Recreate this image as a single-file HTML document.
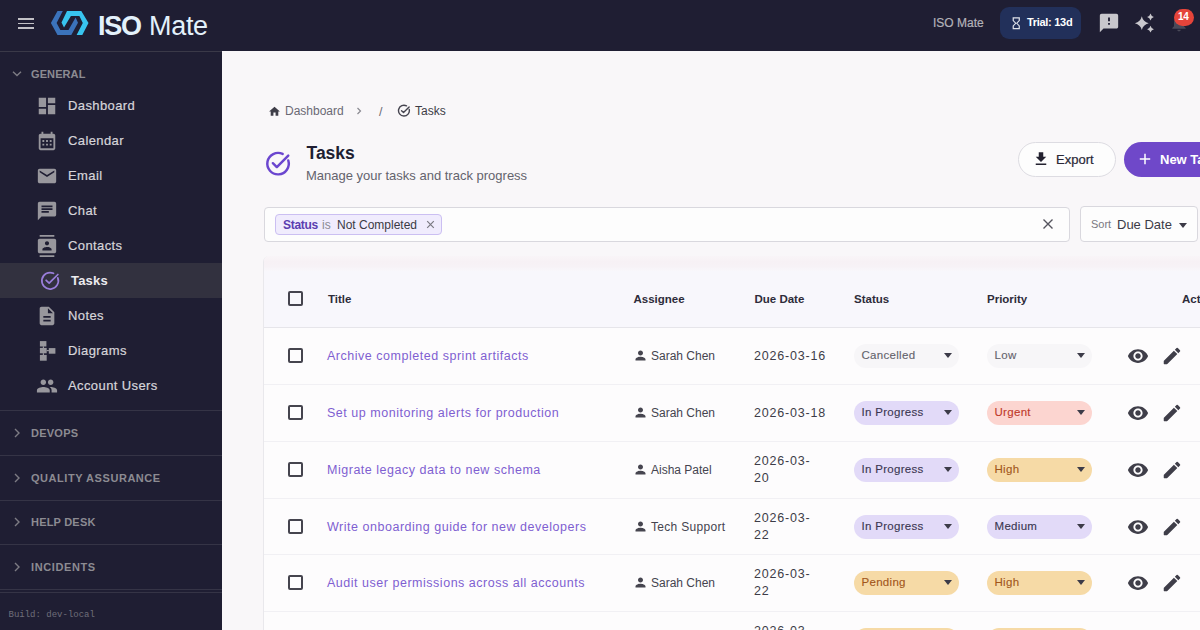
<!DOCTYPE html>
<html><head><meta charset="utf-8">
<style>
*{box-sizing:border-box;margin:0;padding:0}
html,body{width:1200px;height:630px;overflow:hidden;background:#f9f7f9;font-family:"Liberation Sans",sans-serif;-webkit-font-smoothing:antialiased}
.abs{position:absolute}
#hdr{position:absolute;left:0;top:0;width:1200px;height:51px;background:#1f1e33}
#side{position:absolute;left:0;top:51px;width:222px;height:579px;background:#1f1e33;border-top:1px solid #3a3948}
.t{position:absolute;white-space:nowrap;line-height:1}
svg{position:absolute;display:block}
.nav{color:#d6d5da;font-size:13px;letter-spacing:0.4px;-webkit-text-stroke:0.2px #d6d5da}
.sec{color:#8c8b92;font-size:11px;font-weight:bold;letter-spacing:1px}
.sep{position:absolute;left:0;width:222px;height:1px;background:#353446}
.cb{position:absolute;width:15px;height:15px;border:2px solid #45444e;border-radius:2px}
.rowsep{position:absolute;left:264px;width:936px;height:1px;background:#f1f0f4}
.ttl{color:#7f5fd1;font-size:12.5px;letter-spacing:0.52px}
.asg{color:#45444f;font-size:12px}
.dt{color:#3d3c48;font-size:12.5px;line-height:17.5px;letter-spacing:0.8px}
.pill{position:absolute;height:24px;border-radius:12px}
.pt{position:absolute;font-size:11.5px;letter-spacing:.3px;-webkit-text-stroke:0.12px currentColor;white-space:nowrap;line-height:1}
.tri{position:absolute;width:0;height:0;border-left:4px solid transparent;border-right:4px solid transparent;border-top:5px solid #3c3b48}
.th{color:#2e2c3a;font-size:11.5px;font-weight:bold}
</style></head><body>
<div id="hdr"></div>
<div id="side"></div>

<!-- hamburger -->
<div class="abs" style="left:18px;top:18px;width:16px;height:1.5px;background:#c2c1c6"></div>
<div class="abs" style="left:18px;top:22.5px;width:16px;height:1.5px;background:#c2c1c6"></div>
<div class="abs" style="left:18px;top:27px;width:16px;height:1.5px;background:#c2c1c6"></div>
<!-- logo -->
<svg style="left:0;top:0" width="100" height="51" viewBox="0 0 100 51">
<polygon fill="#3b73bb" points="57.5,11.1 62.8,11.1 56.6,23 60.4,29.9 68.5,29.9 75.6,17.5 78,22.8 71.3,34.9 57.5,34.9 50.9,23"/>
<polygon fill="#38c4ef" points="67,11.1 81.3,11.1 88.5,23 82.3,34.9 76.6,34.9 82.8,23 79.4,16.1 70.9,16.1 64,27.5 61.5,22.5"/>
</svg>
<div class="t" style="left:98px;top:12.5px;font-size:27px;font-weight:bold;color:#e3f1fb;letter-spacing:-1.3px">ISO</div>
<div class="t" style="left:149px;top:12.5px;font-size:27px;color:#e3f1fb;letter-spacing:-0.3px">Mate</div>

<!-- sidebar -->
<svg style="left:12px;top:70px" width="10" height="8" viewBox="0 0 10 8"><path d="M1 1.8l4 3.8 4-3.8" fill="none" stroke="#7d7c84" stroke-width="1.4"/></svg>
<div class="t sec" style="left:31px;top:69px;letter-spacing:0.1px">GENERAL</div>
<svg style="left:36px;top:94.5px" width="22" height="22" viewBox="0 0 24 24"><path fill="#98979d" d="M3 13h8V3H3v10zm0 8h8v-6H3v6zm10 0h8V11h-8v10zm0-18v6h8V3h-8z"/></svg>
<div class="t nav" style="left:68px;top:99px">Dashboard</div>
<svg style="left:36px;top:129.5px" width="22" height="22" viewBox="0 0 24 24"><path fill="#98979d" d="M19 4h-1V2h-2v2H8V2H6v2H5c-1.11 0-1.99.9-1.99 2L3 20c0 1.1.89 2 2 2h14c1.1 0 2-.9 2-2V6c0-1.1-.9-2-2-2zm0 16H5V9h14v11zM7 11h2v2H7zm4 0h2v2h-2zm4 0h2v2h-2zM7 15h2v2H7zm4 0h2v2h-2zm4 0h2v2h-2z"/></svg>
<div class="t nav" style="left:68px;top:134px">Calendar</div>
<svg style="left:36px;top:164.5px" width="22" height="22" viewBox="0 0 24 24"><path fill="#98979d" d="M20 4H4c-1.1 0-1.99.9-1.99 2L2 18c0 1.1.9 2 2 2h16c1.1 0 2-.9 2-2V6c0-1.1-.9-2-2-2zm0 4l-8 5-8-5V6l8 5 8-5v2z"/></svg>
<div class="t nav" style="left:68px;top:169px">Email</div>
<svg style="left:36px;top:199.5px" width="22" height="22" viewBox="0 0 24 24"><path fill="#98979d" d="M20 2H4c-1.1 0-1.99.9-1.99 2L2 22l4-4h14c1.1 0 2-.9 2-2V4c0-1.1-.9-2-2-2zM6 9h12v2H6V9zm8 5H6v-2h8v2zm4-6H6V6h12v2z"/></svg>
<div class="t nav" style="left:68px;top:204px">Chat</div>
<svg style="left:36px;top:234.5px" width="22" height="22" viewBox="0 0 24 24"><path fill="#98979d" d="M20 0H4v2h16V0zM4 24h16v-2H4v2zM20 4H4c-1.1 0-2 .9-2 2v12c0 1.1.9 2 2 2h16c1.1 0 2-.9 2-2V6c0-1.1-.9-2-2-2zm-8 2.75c1.24 0 2.25 1.01 2.25 2.25s-1.01 2.25-2.25 2.25S9.75 10.24 9.75 9 10.76 6.75 12 6.75zM17 17H7v-1.5c0-1.67 3.33-2.5 5-2.5s5 .83 5 2.5V17z"/></svg>
<div class="t nav" style="left:68px;top:239px">Contacts</div>
<div class="abs" style="left:0;top:263px;width:222px;height:35px;background:#32313f"></div>
<svg style="left:39px;top:270px" width="22" height="22" viewBox="0 0 24 24"><path d="M20.5 8.6A9 9 0 1 1 15.8 3.6" fill="none" stroke="#9a7edb" stroke-width="1.9" stroke-linecap="round"/><path d="M7.8 11.2l3.3 3.2L20.6 4.9" fill="none" stroke="#9a7edb" stroke-width="1.9" stroke-linecap="round" stroke-linejoin="round"/></svg>
<div class="t nav" style="left:71px;top:274px;font-weight:bold;color:#ecebef;-webkit-text-stroke:0;letter-spacing:0.2px">Tasks</div>
<svg style="left:36px;top:304.5px" width="22" height="22" viewBox="0 0 24 24"><path fill="#98979d" d="M14 2H6c-1.1 0-1.99.9-1.99 2L4 20c0 1.1.89 2 1.99 2H18c1.1 0 2-.9 2-2V8l-6-6zm2 16H8v-2h8v2zm0-4H8v-2h8v2zm-3-5V3.5L18.5 9H13z"/></svg>
<div class="t nav" style="left:68px;top:309px">Notes</div>
<svg style="left:36px;top:338px" width="24" height="26" viewBox="0 0 24 26"><g fill="#98979d"><rect x="3.9" y="3.1" width="6.5" height="5.4"/><rect x="3.9" y="9.9" width="6.8" height="5.4"/><rect x="3.9" y="16.9" width="6.8" height="5.8"/><rect x="12.8" y="10.1" width="6.6" height="5.6"/><rect x="6.8" y="8.3" width="1.2" height="1.8"/><rect x="6.8" y="15.2" width="1.2" height="1.8"/><rect x="10.6" y="12" width="2.3" height="1.2"/></g></svg>
<div class="t nav" style="left:68px;top:344px">Diagrams</div>
<svg style="left:36px;top:374.5px" width="22" height="22" viewBox="0 0 24 24"><path fill="#98979d" d="M16 11c1.66 0 2.99-1.34 2.99-3S17.66 5 16 5c-1.66 0-3 1.34-3 3s1.34 3 3 3zm-8 0c1.66 0 2.99-1.34 2.99-3S9.66 5 8 5C6.34 5 5 6.34 5 8s1.34 3 3 3zm0 2c-2.33 0-7 1.17-7 3.5V19h14v-2.5c0-2.33-4.67-3.5-7-3.5zm8 0c-.29 0-.62.02-.97.05 1.16.84 1.97 1.97 1.97 3.45V19h6v-2.5c0-2.33-4.67-3.5-7-3.5z"/></svg>
<div class="t nav" style="left:68px;top:379px">Account Users</div>
<div class="sep" style="top:410px"></div>
<svg style="left:12px;top:428px" width="10" height="10" viewBox="0 0 10 10"><path d="M3 1l4 4-4 4" fill="none" stroke="#7d7c84" stroke-width="1.4"/></svg>
<div class="t sec" style="left:31px;top:428px;letter-spacing:0.25px">DEVOPS</div>
<div class="sep" style="top:455px"></div>
<svg style="left:12px;top:473px" width="10" height="10" viewBox="0 0 10 10"><path d="M3 1l4 4-4 4" fill="none" stroke="#7d7c84" stroke-width="1.4"/></svg>
<div class="t sec" style="left:31px;top:473px;letter-spacing:0.55px">QUALITY ASSURANCE</div>
<div class="sep" style="top:500px"></div>
<svg style="left:12px;top:517px" width="10" height="10" viewBox="0 0 10 10"><path d="M3 1l4 4-4 4" fill="none" stroke="#7d7c84" stroke-width="1.4"/></svg>
<div class="t sec" style="left:31px;top:517px;letter-spacing:0.2px">HELP DESK</div>
<div class="sep" style="top:544px"></div>
<svg style="left:12px;top:562px" width="10" height="10" viewBox="0 0 10 10"><path d="M3 1l4 4-4 4" fill="none" stroke="#7d7c84" stroke-width="1.4"/></svg>
<div class="t sec" style="left:31px;top:562px;letter-spacing:0.6px">INCIDENTS</div>
<div class="sep" style="top:589px"></div>
<div class="sep" style="top:592px"></div>
<div class="t" style="left:8.5px;top:611px;font-family:'Liberation Mono',monospace;font-size:9px;color:#6f6e7a">Build: dev-local</div>


<!-- table -->
<div class="abs" style="left:263px;top:256px;width:940px;height:380px;background:#fdfcfd;border-left:1px solid #e9e8ec;border-top-left-radius:6px;overflow:hidden"></div>
<div class="abs" style="left:264px;top:256px;width:940px;height:15px;border-top-left-radius:5px;background:linear-gradient(#f9f5f8,#f7f1f5 40%,#f7f2f6 70%,#f9f7fb)"></div>
<div class="abs" style="left:264px;top:271px;width:940px;height:57px;background:#f8f7fc;border-bottom:1px solid #e6e5ea"></div>
<div class="cb" style="left:288px;top:291px"></div>
<div class="t th" style="left:328px;top:293.5px">Title</div>
<div class="t th" style="left:633.5px;top:293.5px">Assignee</div>
<div class="t th" style="left:754.5px;top:293.5px">Due Date</div>
<div class="t th" style="left:854px;top:293.5px">Status</div>
<div class="t th" style="left:987px;top:293.5px">Priority</div>
<div class="t th" style="left:1182px;top:293.5px">Actions</div>
<div class="cb" style="left:288px;top:348px"></div>
<div class="t ttl" style="left:327px;top:349.75px">Archive completed sprint artifacts</div>
<svg style="left:633px;top:347.5px" width="15" height="15" viewBox="0 0 24 24"><path fill="#46454f" d="M12 12c2.21 0 4-1.79 4-4s-1.79-4-4-4-4 1.79-4 4 1.79 4 4 4zm0 2c-2.67 0-8 1.34-8 4v2h16v-2c0-2.66-5.33-4-8-4z"/></svg>
<div class="t asg" style="left:651px;top:349.75px">Sarah Chen</div>
<div class="t dt" style="left:754px;top:349.75px;line-height:1">2026-03-16</div>
<div class="pill" style="left:854px;top:343.5px;width:105px;background:#f7f6f8"></div>
<div class="pt" style="left:861.5px;top:349.5px;color:#64636c">Cancelled</div>
<div class="tri" style="left:943.5px;top:353px"></div>
<div class="pill" style="left:987px;top:343.5px;width:105px;background:#f7f6f8"></div>
<div class="pt" style="left:994.5px;top:349.5px;color:#64636c">Low</div>
<div class="tri" style="left:1076.5px;top:353px"></div>
<svg style="left:1126.5px;top:344.5px" width="22" height="22" viewBox="0 0 24 24"><path fill="#3f3e49" d="M12 4.5C7 4.5 2.73 7.61 1 12c1.73 4.39 6 7.5 11 7.5s9.27-3.11 11-7.5c-1.73-4.39-6-7.5-11-7.5zM12 17c-2.76 0-5-2.24-5-5s2.24-5 5-5 5 2.24 5 5-2.24 5-5 5zm0-8c-1.66 0-3 1.34-3 3s1.34 3 3 3 3-1.34 3-3-1.34-3-3-3z"/></svg>
<svg style="left:1161.3px;top:344.5px" width="22" height="22" viewBox="0 0 24 24"><path fill="#3f3e49" d="M3 17.46v3.04c0 .28.22.5.5.5h3.04c.13 0 .26-.05.35-.15L17.81 9.94l-3.75-3.75L3.15 17.1c-.1.1-.15.22-.15.36zM20.71 7.04a.996.996 0 0 0 0-1.41l-2.34-2.34a.996.996 0 0 0-1.41 0l-1.83 1.83 3.75 3.75 1.83-1.83z"/></svg>
<div class="rowsep" style="top:384px"></div>
<div class="cb" style="left:288px;top:405px"></div>
<div class="t ttl" style="left:327px;top:406.75px">Set up monitoring alerts for production</div>
<svg style="left:633px;top:404.5px" width="15" height="15" viewBox="0 0 24 24"><path fill="#46454f" d="M12 12c2.21 0 4-1.79 4-4s-1.79-4-4-4-4 1.79-4 4 1.79 4 4 4zm0 2c-2.67 0-8 1.34-8 4v2h16v-2c0-2.66-5.33-4-8-4z"/></svg>
<div class="t asg" style="left:651px;top:406.75px">Sarah Chen</div>
<div class="t dt" style="left:754px;top:406.75px;line-height:1">2026-03-18</div>
<div class="pill" style="left:854px;top:400.5px;width:105px;background:#e2daf8"></div>
<div class="pt" style="left:861.5px;top:406.5px;color:#3a3652">In Progress</div>
<div class="tri" style="left:943.5px;top:410px"></div>
<div class="pill" style="left:987px;top:400.5px;width:105px;background:#fcd5d0"></div>
<div class="pt" style="left:994.5px;top:406.5px;color:#c0392b">Urgent</div>
<div class="tri" style="left:1076.5px;top:410px"></div>
<svg style="left:1126.5px;top:401.5px" width="22" height="22" viewBox="0 0 24 24"><path fill="#3f3e49" d="M12 4.5C7 4.5 2.73 7.61 1 12c1.73 4.39 6 7.5 11 7.5s9.27-3.11 11-7.5c-1.73-4.39-6-7.5-11-7.5zM12 17c-2.76 0-5-2.24-5-5s2.24-5 5-5 5 2.24 5 5-2.24 5-5 5zm0-8c-1.66 0-3 1.34-3 3s1.34 3 3 3 3-1.34 3-3-1.34-3-3-3z"/></svg>
<svg style="left:1161.3px;top:401.5px" width="22" height="22" viewBox="0 0 24 24"><path fill="#3f3e49" d="M3 17.46v3.04c0 .28.22.5.5.5h3.04c.13 0 .26-.05.35-.15L17.81 9.94l-3.75-3.75L3.15 17.1c-.1.1-.15.22-.15.36zM20.71 7.04a.996.996 0 0 0 0-1.41l-2.34-2.34a.996.996 0 0 0-1.41 0l-1.83 1.83 3.75 3.75 1.83-1.83z"/></svg>
<div class="rowsep" style="top:441px"></div>
<div class="cb" style="left:288px;top:462px"></div>
<div class="t ttl" style="left:327px;top:463.75px">Migrate legacy data to new schema</div>
<svg style="left:633px;top:461.5px" width="15" height="15" viewBox="0 0 24 24"><path fill="#46454f" d="M12 12c2.21 0 4-1.79 4-4s-1.79-4-4-4-4 1.79-4 4 1.79 4 4 4zm0 2c-2.67 0-8 1.34-8 4v2h16v-2c0-2.66-5.33-4-8-4z"/></svg>
<div class="t asg" style="left:651px;top:463.75px">Aisha Patel</div>
<div class="t dt" style="left:754px;top:452.5px">2026-03-<br>20</div>
<div class="pill" style="left:854px;top:457.5px;width:105px;background:#e2daf8"></div>
<div class="pt" style="left:861.5px;top:463.5px;color:#3a3652">In Progress</div>
<div class="tri" style="left:943.5px;top:467px"></div>
<div class="pill" style="left:987px;top:457.5px;width:105px;background:#f6daa6"></div>
<div class="pt" style="left:994.5px;top:463.5px;color:#a2561b">High</div>
<div class="tri" style="left:1076.5px;top:467px"></div>
<svg style="left:1126.5px;top:458.5px" width="22" height="22" viewBox="0 0 24 24"><path fill="#3f3e49" d="M12 4.5C7 4.5 2.73 7.61 1 12c1.73 4.39 6 7.5 11 7.5s9.27-3.11 11-7.5c-1.73-4.39-6-7.5-11-7.5zM12 17c-2.76 0-5-2.24-5-5s2.24-5 5-5 5 2.24 5 5-2.24 5-5 5zm0-8c-1.66 0-3 1.34-3 3s1.34 3 3 3 3-1.34 3-3-1.34-3-3-3z"/></svg>
<svg style="left:1161.3px;top:458.5px" width="22" height="22" viewBox="0 0 24 24"><path fill="#3f3e49" d="M3 17.46v3.04c0 .28.22.5.5.5h3.04c.13 0 .26-.05.35-.15L17.81 9.94l-3.75-3.75L3.15 17.1c-.1.1-.15.22-.15.36zM20.71 7.04a.996.996 0 0 0 0-1.41l-2.34-2.34a.996.996 0 0 0-1.41 0l-1.83 1.83 3.75 3.75 1.83-1.83z"/></svg>
<div class="rowsep" style="top:498px"></div>
<div class="cb" style="left:288px;top:519px"></div>
<div class="t ttl" style="left:327px;top:520.75px">Write onboarding guide for new developers</div>
<svg style="left:633px;top:518.5px" width="15" height="15" viewBox="0 0 24 24"><path fill="#46454f" d="M12 12c2.21 0 4-1.79 4-4s-1.79-4-4-4-4 1.79-4 4 1.79 4 4 4zm0 2c-2.67 0-8 1.34-8 4v2h16v-2c0-2.66-5.33-4-8-4z"/></svg>
<div class="t asg" style="left:651px;top:520.75px;letter-spacing:0.3px">Tech Support</div>
<div class="t dt" style="left:754px;top:509.5px">2026-03-<br>22</div>
<div class="pill" style="left:854px;top:514.5px;width:105px;background:#e2daf8"></div>
<div class="pt" style="left:861.5px;top:520.5px;color:#3a3652">In Progress</div>
<div class="tri" style="left:943.5px;top:524px"></div>
<div class="pill" style="left:987px;top:514.5px;width:105px;background:#e2daf8"></div>
<div class="pt" style="left:994.5px;top:520.5px;color:#3a3652">Medium</div>
<div class="tri" style="left:1076.5px;top:524px"></div>
<svg style="left:1126.5px;top:515.5px" width="22" height="22" viewBox="0 0 24 24"><path fill="#3f3e49" d="M12 4.5C7 4.5 2.73 7.61 1 12c1.73 4.39 6 7.5 11 7.5s9.27-3.11 11-7.5c-1.73-4.39-6-7.5-11-7.5zM12 17c-2.76 0-5-2.24-5-5s2.24-5 5-5 5 2.24 5 5-2.24 5-5 5zm0-8c-1.66 0-3 1.34-3 3s1.34 3 3 3 3-1.34 3-3-1.34-3-3-3z"/></svg>
<svg style="left:1161.3px;top:515.5px" width="22" height="22" viewBox="0 0 24 24"><path fill="#3f3e49" d="M3 17.46v3.04c0 .28.22.5.5.5h3.04c.13 0 .26-.05.35-.15L17.81 9.94l-3.75-3.75L3.15 17.1c-.1.1-.15.22-.15.36zM20.71 7.04a.996.996 0 0 0 0-1.41l-2.34-2.34a.996.996 0 0 0-1.41 0l-1.83 1.83 3.75 3.75 1.83-1.83z"/></svg>
<div class="rowsep" style="top:554px"></div>
<div class="cb" style="left:288px;top:575px"></div>
<div class="t ttl" style="left:327px;top:576.75px">Audit user permissions across all accounts</div>
<svg style="left:633px;top:574.5px" width="15" height="15" viewBox="0 0 24 24"><path fill="#46454f" d="M12 12c2.21 0 4-1.79 4-4s-1.79-4-4-4-4 1.79-4 4 1.79 4 4 4zm0 2c-2.67 0-8 1.34-8 4v2h16v-2c0-2.66-5.33-4-8-4z"/></svg>
<div class="t asg" style="left:651px;top:576.75px">Sarah Chen</div>
<div class="t dt" style="left:754px;top:565.5px">2026-03-<br>22</div>
<div class="pill" style="left:854px;top:570.5px;width:105px;background:#f6daa6"></div>
<div class="pt" style="left:861.5px;top:576.5px;color:#a2561b">Pending</div>
<div class="tri" style="left:943.5px;top:580px"></div>
<div class="pill" style="left:987px;top:570.5px;width:105px;background:#f6daa6"></div>
<div class="pt" style="left:994.5px;top:576.5px;color:#a2561b">High</div>
<div class="tri" style="left:1076.5px;top:580px"></div>
<svg style="left:1126.5px;top:571.5px" width="22" height="22" viewBox="0 0 24 24"><path fill="#3f3e49" d="M12 4.5C7 4.5 2.73 7.61 1 12c1.73 4.39 6 7.5 11 7.5s9.27-3.11 11-7.5c-1.73-4.39-6-7.5-11-7.5zM12 17c-2.76 0-5-2.24-5-5s2.24-5 5-5 5 2.24 5 5-2.24 5-5 5zm0-8c-1.66 0-3 1.34-3 3s1.34 3 3 3 3-1.34 3-3-1.34-3-3-3z"/></svg>
<svg style="left:1161.3px;top:571.5px" width="22" height="22" viewBox="0 0 24 24"><path fill="#3f3e49" d="M3 17.46v3.04c0 .28.22.5.5.5h3.04c.13 0 .26-.05.35-.15L17.81 9.94l-3.75-3.75L3.15 17.1c-.1.1-.15.22-.15.36zM20.71 7.04a.996.996 0 0 0 0-1.41l-2.34-2.34a.996.996 0 0 0-1.41 0l-1.83 1.83 3.75 3.75 1.83-1.83z"/></svg>
<div class="rowsep" style="top:611px"></div>
<div class="cb" style="left:288px;top:632px"></div>
<div class="t dt" style="left:754px;top:622.5px">2026-03-<br>24</div>
<div class="pill" style="left:854px;top:627.5px;width:105px;background:#f6daa6"></div>
<div class="pt" style="left:861.5px;top:633.5px;color:#a2561b">Pending</div>
<div class="tri" style="left:943.5px;top:637px"></div>
<div class="pill" style="left:987px;top:627.5px;width:105px;background:#f6daa6"></div>
<div class="pt" style="left:994.5px;top:633.5px;color:#a2561b">High</div>
<div class="tri" style="left:1076.5px;top:637px"></div>
<svg style="left:1126.5px;top:628.5px" width="22" height="22" viewBox="0 0 24 24"><path fill="#3f3e49" d="M12 4.5C7 4.5 2.73 7.61 1 12c1.73 4.39 6 7.5 11 7.5s9.27-3.11 11-7.5c-1.73-4.39-6-7.5-11-7.5zM12 17c-2.76 0-5-2.24-5-5s2.24-5 5-5 5 2.24 5 5-2.24 5-5 5zm0-8c-1.66 0-3 1.34-3 3s1.34 3 3 3 3-1.34 3-3-1.34-3-3-3z"/></svg>
<svg style="left:1161.3px;top:628.5px" width="22" height="22" viewBox="0 0 24 24"><path fill="#3f3e49" d="M3 17.46v3.04c0 .28.22.5.5.5h3.04c.13 0 .26-.05.35-.15L17.81 9.94l-3.75-3.75L3.15 17.1c-.1.1-.15.22-.15.36zM20.71 7.04a.996.996 0 0 0 0-1.41l-2.34-2.34a.996.996 0 0 0-1.41 0l-1.83 1.83 3.75 3.75 1.83-1.83z"/></svg>
<!-- main -->
<svg style="left:268px;top:104.5px" width="13" height="13" viewBox="0 0 24 24"><path fill="#3e3d48" d="M10 20v-6h4v6h5v-8h3L12 3 2 12h3v8z"/></svg>
<div class="t" style="left:285px;top:105px;font-size:12px;color:#6a6974">Dashboard</div>
<svg style="left:355px;top:106px" width="8" height="10" viewBox="0 0 8 10"><path d="M2.5 2l3 3-3 3" fill="none" stroke="#8a8991" stroke-width="1.2"/></svg>
<div class="t" style="left:379px;top:106px;font-size:12.5px;color:#6a6974">/</div>
<svg style="left:397px;top:104px" width="14" height="14" viewBox="0 0 24 24"><path d="M21 9.5A9.3 9.3 0 1 1 16.3 3.2" fill="none" stroke="#45444f" stroke-width="2.4" stroke-linecap="round"/><path d="M7.8 11.5l3.4 3.2 9.6-9.5" fill="none" stroke="#45444f" stroke-width="2.4" stroke-linecap="round" stroke-linejoin="round"/></svg>
<div class="t" style="left:415px;top:105px;font-size:12px;color:#3d3c46">Tasks</div>

<svg style="left:264px;top:150px" width="28" height="28" viewBox="0 0 24 24"><path d="M20.8 8.9A9.2 9.2 0 1 1 16 3.4" fill="none" stroke="#6b46cf" stroke-width="2.1" stroke-linecap="round"/><path d="M7.6 11.3l3.4 3.3 9.8-9.8" fill="none" stroke="#6b46cf" stroke-width="2.1" stroke-linecap="round" stroke-linejoin="round"/></svg>
<div class="t" style="left:306.5px;top:144.5px;font-size:17.5px;font-weight:bold;color:#201e32">Tasks</div>
<div class="t" style="left:306px;top:169px;font-size:13px;color:#64636d">Manage your tasks and track progress</div>

<div class="abs" style="left:1018px;top:142px;width:98px;height:35px;border-radius:18px;background:#fdfdfd;border:1px solid #dddce2"></div>
<svg style="left:1032px;top:150px" width="18" height="18" viewBox="0 0 24 24"><path fill="#23212f" d="M19 9h-4V3H9v6H5l7 7 7-7zM5 18v2h14v-2H5z"/></svg>
<div class="t" style="left:1056px;top:153px;font-size:13px;color:#2a2837;-webkit-text-stroke:0.2px #2a2837">Export</div>
<div class="abs" style="left:1124px;top:142px;width:120px;height:35px;border-radius:18px;background:#6f48c9"></div>
<svg style="left:1138px;top:152px" width="14" height="14" viewBox="0 0 14 14"><path d="M7 1.8v10.4M1.8 7h10.4" stroke="#fff" stroke-width="1.5"/></svg>
<div class="t" style="left:1160px;top:153px;font-size:13px;font-weight:bold;color:#fff">New Task</div>

<div class="abs" style="left:264px;top:207px;width:806px;height:35px;border-radius:4px;background:#fdfdfd;border:1px solid #d9d8de"></div>
<div class="abs" style="left:275px;top:214px;width:167px;height:21px;border-radius:4px;background:#f0ecfd;border:1px solid #cbbff2"></div>
<div class="t" style="left:283px;top:218.5px;font-size:12px;font-weight:bold;color:#5a3eb0;letter-spacing:-0.3px">Status</div>
<div class="t" style="left:322px;top:218.5px;font-size:12px;color:#8b8a92">is</div>
<div class="t" style="left:337px;top:218.5px;font-size:12px;color:#3b3a44">Not Completed</div>
<svg style="left:426px;top:220px" width="9" height="9" viewBox="0 0 9 9"><path d="M1.2 1.2l6.6 6.6M7.8 1.2L1.2 7.8" stroke="#7a7982" stroke-width="1.2"/></svg>
<svg style="left:1042px;top:218px" width="12" height="12" viewBox="0 0 12 12"><path d="M1.5 1.5l9 9M10.5 1.5l-9 9" stroke="#55545e" stroke-width="1.4"/></svg>
<div class="abs" style="left:1080px;top:206px;width:118px;height:36px;border-radius:4px;background:#fdfdfd;border:1px solid #d9d8de"></div>
<div class="t" style="left:1091px;top:219px;font-size:11px;color:#7a7982">Sort</div>
<div class="t" style="left:1117px;top:218px;font-size:13px;color:#3c3b47">Due Date</div>
<div class="tri" style="left:1178.5px;top:223px;border-top-color:#3c3b47"></div>

<!-- right -->
<div class="t" style="left:933px;top:17px;font-size:12px;color:#b3b2b9;-webkit-text-stroke:0.2px #b3b2b9">ISO Mate</div>
<div class="abs" style="left:1000px;top:7px;width:81px;height:32px;border-radius:9px;background:#22305a"></div>
<svg style="left:1008.5px;top:16px" width="14.5" height="14.5" viewBox="0 0 24 24"><path fill="#dfe2ea" d="M6 2v6h.01L6 8.01 10 12l-4 4 .01.01H6V22h12v-5.99h-.01L18 16l-4-4 4-3.99-.01-.01H18V2H6zm10 14.5V20H8v-3.5l4-4 4 4zm-4-5l-4-4V4h8v3.5l-4 4z"/></svg>
<div class="t" style="left:1027px;top:17px;font-size:11px;font-weight:bold;color:#ffffff;letter-spacing:-0.3px">Trial: 13d</div>
<svg style="left:1098px;top:12px" width="22" height="22" viewBox="0 0 24 24"><path fill="#c8c7cc" d="M20 2H4c-1.1 0-1.99.9-1.99 2L2 22l4-4h14c1.1 0 2-.9 2-2V4c0-1.1-.9-2-2-2zm-7 12h-2v-2h2v2zm0-4h-2V6h2v4z"/></svg>
<svg style="left:1130px;top:10px" width="30" height="26" viewBox="0 0 30 26"><path fill="#c9c8cd" d="M11.80 6.30Q13.10 11.90 18.70 13.20Q13.10 14.50 11.80 20.10Q10.50 14.50 4.90 13.20Q10.50 11.90 11.80 6.30ZM20.50 3.60Q21.15 6.35 23.90 7.00Q21.15 7.65 20.50 10.40Q19.85 7.65 17.10 7.00Q19.85 6.35 20.50 3.60ZM20.50 15.80Q21.15 18.55 23.90 19.20Q21.15 19.85 20.50 22.60Q19.85 19.85 17.10 19.20Q19.85 18.55 20.50 15.80Z"/></svg>
<svg style="left:1169px;top:13px" width="20" height="20" viewBox="0 0 24 24"><path fill="#4a4958" d="M12 22c1.1 0 2-.9 2-2h-4c0 1.1.89 2 2 2zm6-6v-5c0-3.07-1.64-5.64-4.5-6.32V4c0-.83-.67-1.5-1.5-1.5s-1.5.67-1.5 1.5v.68C7.63 5.36 6 7.92 6 11v5l-2 2v1h16v-1l-2-2z"/></svg>
<div class="abs" style="left:1174px;top:8.5px;width:20px;height:17px;border-radius:9px;background:#e5443a"></div>
<div class="t" style="left:1178px;top:12px;font-size:10px;font-weight:bold;color:#fff;letter-spacing:-0.2px">14</div>

</body></html>
